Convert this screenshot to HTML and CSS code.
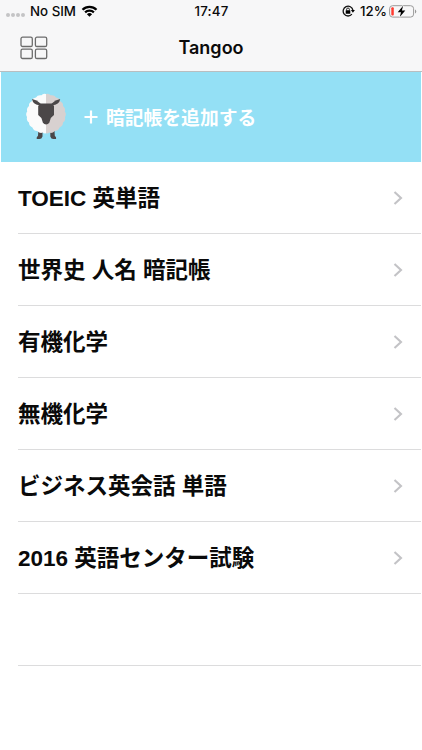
FILE: index.html
```html
<!DOCTYPE html>
<html lang="ja">
<head>
    <meta charset="UTF-8">
    <meta name="viewport" content="width=device-width, initial-scale=1.0">
    <title>Tangoo</title>
    <link rel="stylesheet" href="styles.css">
</head>
<body>
    <header class="header">
        <div class="status-bar">
            <div class="carrier">
                <div class="signal"><i></i><i></i><i></i><i></i></div>
                <span class="carrier-name">No SIM</span>
                <svg class="wifi" width="17" height="12" viewBox="0 0 16 12">
                    <path d="M0.2 3.9 A11.2 11.2 0 0 1 15.8 3.9 L14.2 5.5 A8.8 8.8 0 0 0 1.8 5.5 Z"/>
                    <path d="M2.8 6.6 A7.4 7.4 0 0 1 13.2 6.6 L11.6 8.2 A5.1 5.1 0 0 0 4.4 8.2 Z"/>
                    <path d="M5.4 9.2 A3.7 3.7 0 0 1 10.6 9.2 L8 11.8 Z"/>
                </svg>
            </div>
            <span class="time">17:47</span>
            <div class="power">
                <svg class="lock" width="13" height="12" viewBox="0 0 13 12">
                    <path d="M9.9 9.2 A4.9 4.9 0 1 1 10.9 5.2" fill="none" stroke="#111" stroke-width="1.3"/>
                    <path d="M8.9 5 H12.9 L10.9 7.8 Z"/>
                    <rect x="3.7" y="5.2" width="4.6" height="3.6" rx="0.4"/>
                    <path d="M4.6 5.4 V4.4 a1.4 1.4 0 0 1 2.8 0 V5.4" fill="none" stroke="#111" stroke-width="0.9"/>
                </svg>
                <span class="percent">12%</span>
                <svg class="battery" width="28" height="13" viewBox="0 0 28 13">
                    <rect x="0.6" y="0.7" width="24" height="11.4" rx="3" fill="none" stroke="#999" stroke-width="1"/>
                    <path d="M26 4.4 a2.2 2.2 0 0 1 0 4 Z" fill="#999"/>
                    <rect x="2.3" y="2.3" width="2.5" height="8.2" rx="1" fill="#ff3b30"/>
                    <path d="M14.1 0.8 L8.7 7.3 H12 L10.8 12 L16.3 5.4 H12.9 Z" stroke="#f7f7f8" stroke-width="1.4" paint-order="stroke"/>
                </svg>
            </div>
        </div>
        <div class="nav-bar">
            <svg class="menu" width="28" height="24" viewBox="0 0 28 24" fill="none" stroke="#6c6c6c" stroke-width="1.3">
                <rect x="1" y="1.2" width="11.3" height="9.3" rx="1.6"/>
                <rect x="15.4" y="1.2" width="11.3" height="9.3" rx="1.6"/>
                <rect x="1" y="13.2" width="11.3" height="9.3" rx="1.6"/>
                <rect x="15.4" y="13.2" width="11.3" height="9.3" rx="1.6"/>
            </svg>
            <h1>Tangoo</h1>
        </div>
    </header>

    <main>
        <a class="add">
            <svg class="sheep" width="42" height="48" viewBox="0 0 42 48">
                <!-- legs -->
                <path d="M13.3 38 h4.2 v5.5 q-.8 2.5 -3 2.5 h-2.8 q-.5 -2 1.3 -3.2 Z" fill="#4b4748"/>
                <path d="M25.3 38 h4.2 l.3 4.8 q1.8 1.2 1.3 3.2 h-2.8 q-2.2 0 -3 -2.5 Z" fill="#4b4748"/>
                <!-- wool -->
                <path d="M21 1 Q18 0 16.5 2.3 Q12.5 1.6 11 4.6 Q7.5 5 6.8 8.2 Q3.5 9.8 4 13 Q1.2 15.3 2.2 18.5 Q0.2 21 2 24 Q1.2 27.5 4 29.6 Q4 33.2 7.4 34.5 Q8.7 38 12.2 38 Q14.8 40.8 17.8 39.6 Q19.2 40.8 21 40.3 Z" fill="#fbfbfb"/>
                <path d="M21 1 Q24 0 25.5 2.3 Q29.5 1.6 31 4.6 Q34.5 5 35.2 8.2 Q38.5 9.8 38 13 Q40.8 15.3 39.8 18.5 Q41.8 21 40 24 Q40.8 27.5 38 29.6 Q38 33.2 34.6 34.5 Q33.3 38 29.8 38 Q27.2 40.8 24.2 39.6 Q22.8 40.8 21 40.3 Z" fill="#d8d1d0"/>
                <!-- ears -->
                <path d="M15.5 10.4 Q12 6.8 7 6 Q8 12 15 12.2 Z" fill="#4b4748"/>
                <path d="M26.7 10.4 Q30.2 6.8 35.2 6 Q34.2 12 27.2 12.2 Z" fill="#4b4748"/>
                <!-- head -->
                <path d="M15 10.4 H27.2 L29 13 V22 L25.8 25 L24.3 29.8 Q23 31.4 21.1 31.4 Q19.2 31.4 17.9 29.8 L16.4 25 L13.2 22 V13 Z" fill="#4b4748"/>
            </svg>
            <svg class="plus" width="14" height="14" viewBox="0 0 14 14">
                <path d="M7 0.5 V13.5 M0.5 7 H13.5" stroke="#fff" stroke-width="2.2"/>
            </svg>
            <span class="add-label">暗記帳を追加する</span>
        </a>

        <ul class="list">
            <li><span>TOEIC 英単語</span><svg class="arrow" width="10" height="16" viewBox="0 0 10 16"><path d="M1.5 2 L8 8 L1.5 14"/></svg></li>
            <li><span>世界史 人名 暗記帳</span><svg class="arrow" width="10" height="16" viewBox="0 0 10 16"><path d="M1.5 2 L8 8 L1.5 14"/></svg></li>
            <li><span>有機化学</span><svg class="arrow" width="10" height="16" viewBox="0 0 10 16"><path d="M1.5 2 L8 8 L1.5 14"/></svg></li>
            <li><span>無機化学</span><svg class="arrow" width="10" height="16" viewBox="0 0 10 16"><path d="M1.5 2 L8 8 L1.5 14"/></svg></li>
            <li><span>ビジネス英会話 単語</span><svg class="arrow" width="10" height="16" viewBox="0 0 10 16"><path d="M1.5 2 L8 8 L1.5 14"/></svg></li>
            <li><span>2016 英語センター試験</span><svg class="arrow" width="10" height="16" viewBox="0 0 10 16"><path d="M1.5 2 L8 8 L1.5 14"/></svg></li>
            <li></li>
        </ul>
    </main>
</body>
</html>
```

FILE: styles.css
```css
body {
    font-family: Inter, "Noto Sans CJK JP", sans-serif;
    margin: 0;
    padding: 0;
    background-color: #fff;
    color: #0a0a0a;
    overflow: hidden;
}

.header {
    box-sizing: border-box;
    height: 72px;
    background-color: #f7f7f8;
    border-bottom: 1px solid #b9bec0;
}

.status-bar {
    display: grid;
    grid-template-columns: 1fr auto 1fr;
    align-items: center;
    height: 22px;
    padding: 0 5px 0 6px;
    font-size: 13.3px;
    line-height: 22px;
    font-weight: 500;
}

.carrier, .power, .signal {
    display: flex;
    align-items: center;
}

.power {
    justify-content: flex-end;
}

.signal {
    gap: 1px;
    margin: 8px 5px 0 0;
}

.signal i {
    width: 4px;
    height: 4px;
    border-radius: 50%;
    background-color: #c4c4c6;
}

.time {
    letter-spacing: 0.2px;
}

.wifi {
    margin-left: 5px;
}

.lock {
    margin-right: 5px;
}

.battery {
    margin-left: 2px;
}

.nav-bar {
    display: grid;
    grid-template-columns: 1fr auto 1fr;
    align-items: center;
    height: 50px;
    padding: 0 20px;
}

h1 {
    margin: 0;
    padding-top: 1px;
    font-size: 18px;
    font-weight: 600;
    line-height: 50px;
}

main {
    margin: 0 1px;
}

.add {
    display: flex;
    align-items: center;
    box-sizing: border-box;
    height: 90px;
    padding-left: 24px;
    background-color: #94e0f5;
    color: #fff;
}

.plus {
    margin: 0 8px 0 17px;
}

.add-label {
    font-family: "Noto Sans CJK JP", sans-serif;
    font-size: 18.8px;
    font-weight: bold;
    line-height: 28px;
}

.list {
    list-style: none;
    margin: 0;
    padding: 0 0 0 17px;
}

.list li {
    display: flex;
    align-items: center;
    justify-content: space-between;
    box-sizing: border-box;
    height: 72px;
    padding-right: 18px;
    border-bottom: 1px solid #dcdcdd;
    font-family: "Liberation Sans", "Noto Sans CJK JP", sans-serif;
    font-size: 22.5px;
    font-weight: bold;
    line-height: 32px;
}

.list span {
    padding-top: 3px;
}

.arrow {
    fill: none;
    stroke: #c3c3c6;
    stroke-width: 2.1;
}
```
